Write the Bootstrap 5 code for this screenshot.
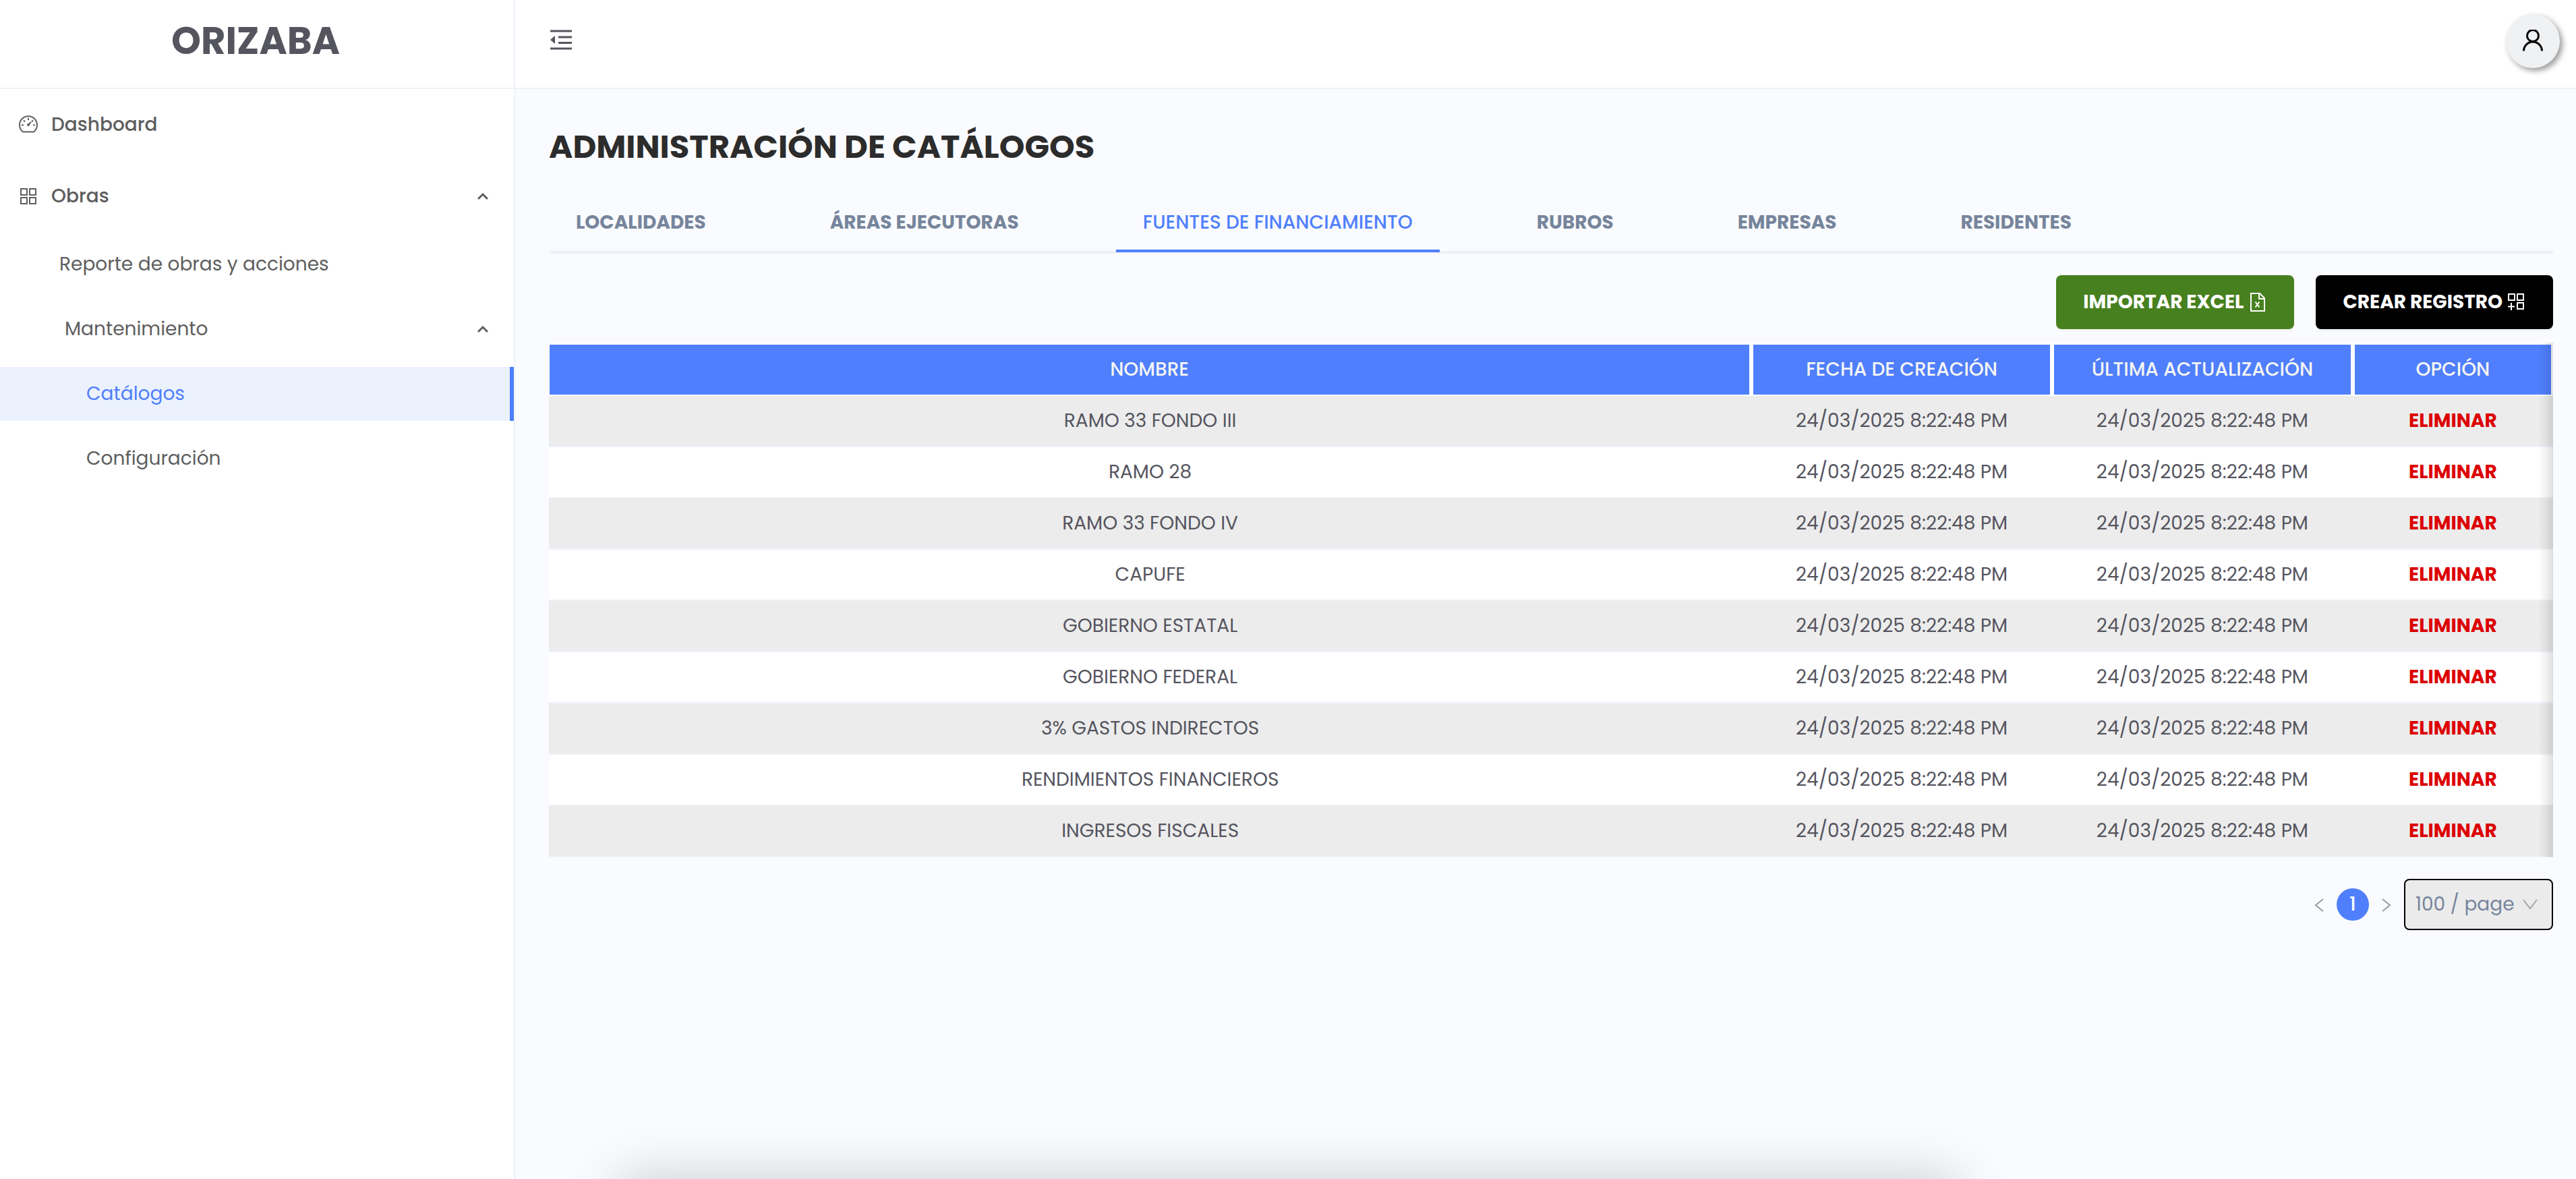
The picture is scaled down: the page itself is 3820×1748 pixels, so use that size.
<!DOCTYPE html>
<html lang="es">
<head>
<meta charset="utf-8">
<meta name="viewport" content="width=device-width, initial-scale=1">
<title>Orizaba - Administración de catálogos</title>
<link rel="stylesheet" href="https://cdn.jsdelivr.net/npm/bootstrap@5.3.0/dist/css/bootstrap.min.css">
<style>
  body { font-family: Poppins, Inter, sans-serif; font-size: 28px; line-height: 44px; color: #55555f; background: #fafbfe; }
  a { text-decoration: none; }
  .side { width: 764px; border-right: 2px solid #edf2fa; }
  .topline { height: 132px; border-bottom: 2px solid #edf2fa; }
  .brand { font-size: 56px; font-weight: 700; padding: 0 4px 8px 0; color: #55555f; }
  .menu { padding-top: 8px; gap: 16px; }
  .menu a { height: 80px; padding: 0 32px 0 128px; color: #5e5e5e; border-right: 6px solid transparent; }
  .menu a.main-item { height: 90px; padding-left: 28px; gap: 20px; font-weight: 500; }
  .menu a.sub-item { padding-left: 88px; }
  .menu a.sub-group { padding-left: 96px; }
  .menu a.active { background: #ebf2fe; color: #4f7ffc; border-right-color: #4f7ffc; }
  .iconbtn { background: none; border: 0; padding: 0; color: #55555f; }
  .bar { padding: 0 24px 8px 50px; }
  .avatar { width: 80px; height: 80px; border: 0; border-radius: 50%; background: #f0f1f3; color: #000; box-shadow: 4px 4px 8px rgba(0,0,0,.4); }
  .content { padding: 54px 34px 40px 50px; }
  .title { font-size: 48px; line-height: 64px; font-weight: 700; color: #2c2c2c; margin: 0; }
  .tabline { margin-top: 30px; height: 96px; gap: 104px; box-shadow: inset 0 -4px #edf0f6; padding-bottom: 2px; }
  .tabline a { padding: 28px 40px 0; font-weight: 700; color: #76859c; border-bottom: 4px solid transparent; white-space: nowrap; }
  .tabline a.active { color: #4f7ffc; font-weight: 500; border-bottom-color: #4f7ffc; }
  .actions { margin: 32px 0 20px; gap: 32px; }
  .actions button { height: 80px; padding: 0 40px; border: 0; border-radius: 8px; color: #fff; font-weight: 700; gap: 7px; box-shadow: 0 4px rgba(0,0,0,.02); }
  .go-import { background: #47801f; }
  .go-create { background: #000; }
  .grid-table { table-layout: fixed; width: 100%; border-collapse: separate; border-spacing: 0; background: #fff; text-align: center; }
  .grid-table th { height: 79px; padding: 0; font-weight: 500; color: #f5f5f5; background: #4f7ffc; border: 3px solid #fff; border-bottom-width: 2px; }
  .grid-table th:first-child { border-left-width: 1px; }
  .grid-table td { height: 76px; padding: 0; border-bottom: 2px solid #edf2fa; }
  .grid-table tbody tr:nth-child(odd) { background: #ececec; }
  .del { background: none; border: 0; padding: 0; font-weight: 700; color: #dc0000; }
  .edge { width: 22px; background: linear-gradient(to right, rgba(0,0,0,0), rgba(0,0,0,.05) 50%, rgba(0,0,0,.13)); }
  .pager { margin-top: 32px; }
  .pager .step { width: 32px; color: #999ba0; }
  .pager .now { width: 48px; height: 48px; border-radius: 50%; background: #4f7ffc; color: #fff; font-weight: 500; margin: 0 10px; }
  .pager .size-box { margin-left: 10px; }
  .pager select { appearance: none; width: 221px; height: 76px; padding: 0 0 0 15px; border: 2px solid #000; border-radius: 8px; background: #ebebeb; color: #76859c; }
  .pager .caret { right: 23px; top: 30px; pointer-events: none; color: #a6a6a6; }
  .dock { position: fixed; left: 24vw; width: 52vw; height: 160px; bottom: -160px; box-shadow: 0 0 80px rgba(0,0,0,.2); }
</style>
<script src="https://cdn.jsdelivr.net/npm/bootstrap@5.3.0/dist/js/bootstrap.bundle.min.js"></script>
</head>
<body>
<div class="d-flex min-vh-100">
  <aside class="side bg-white flex-shrink-0">
    <div class="topline brand d-flex align-items-center justify-content-center">ORIZABA</div>
    <nav class="menu d-flex flex-column">
      <a href="#" class="main-item d-flex align-items-center">
        <svg width="28" height="28" viewBox="0 0 28 28" fill="none" stroke="currentColor" stroke-width="2"><path stroke-linejoin="round" d="M6 24.500A13 13 0 1 1 22 24.500Z"/><path d="M14 14l4-4M14 4v3M4 14.500h3M21 14.500h3M7 7.500l2 2M21 7.500l-2 2"/><circle cx="14" cy="14" r="1"/></svg>
        Dashboard</a>
      <a href="#" class="main-item d-flex align-items-center">
        <svg width="28" height="28" viewBox="0 0 28 28" fill="none" stroke="currentColor" stroke-width="2"><path d="M3 3h9v9H3zM16 3h9v9h-9zM3 16h9v9H3zM16 16h9v9h-9z"/></svg>
        Obras
        <svg class="ms-auto" width="16" height="12" viewBox="0 0 16 12" fill="none" stroke="currentColor" stroke-width="3"><path d="M1 10l7-7 7 7"/></svg></a>
      <a href="#" class="sub-item d-flex align-items-center">Reporte de obras y acciones</a>
      <a href="#" class="sub-group d-flex align-items-center">Mantenimiento
        <svg class="ms-auto" width="16" height="12" viewBox="0 0 16 12" fill="none" stroke="currentColor" stroke-width="3"><path d="M1 10l7-7 7 7"/></svg></a>
      <a href="#" class="active d-flex align-items-center">Catálogos</a>
      <a href="#" class="d-flex align-items-center">Configuración</a>
    </nav>
  </aside>
  <div class="flex-grow-1">
    <header class="topline bar bg-white d-flex align-items-center justify-content-between">
      <button class="iconbtn" type="button" aria-label="Contraer menú"><svg class="d-block" width="36" height="34" viewBox="0 0 36 34" fill="currentColor"><path d="M2 0.500h32v3H2zM14 9.500h20v3H14zM14 18h20v3H14zM2 26.500h32v3H2zM2 15l7-6v12z"/></svg></button>
      <button class="avatar d-flex align-items-center justify-content-center" type="button" aria-label="Usuario"><svg width="32" height="34" viewBox="0 0 32 34" fill="none" stroke="currentColor" stroke-width="3"><circle cx="16" cy="9" r="8.500"/><path d="M2.500 31.500a13.500 13.500 0 0 1 27 0"/></svg></button>
    </header>
    <main class="content">
      <h1 class="title">ADMINISTRACIÓN DE CATÁLOGOS</h1>
      <nav class="tabline d-flex">
        <a href="#">LOCALIDADES</a><a href="#">ÁREAS EJECUTORAS</a><a href="#" class="active">FUENTES DE FINANCIAMIENTO</a><a href="#">RUBROS</a><a href="#">EMPRESAS</a><a href="#">RESIDENTES</a>
      </nav>
      <div class="actions d-flex justify-content-end">
        <button type="button" class="go-import d-flex align-items-center">IMPORTAR EXCEL
          <svg width="28" height="28" viewBox="0 0 28 28" fill="none" stroke="currentColor" stroke-width="2"><path d="M4 1h13l7 7v19H4zM16 1v8h8M10.500 13.500l6 8M16.500 13.500l-6 8"/></svg></button>
        <button type="button" class="go-create d-flex align-items-center">CREAR REGISTRO
          <svg width="28" height="28" viewBox="0 0 28 28" fill="none" stroke="currentColor" stroke-width="2"><path d="M2 2h9v9H2zM15 2h9v9h-9zM15 15h9v9h-9zM6 15v11M1 20.500h10"/></svg></button>
      </div>
      <div class="position-relative">
        <table class="grid-table">
          <colgroup><col style="width:60%"><col style="width:15%"><col style="width:15%"><col style="width:10%"></colgroup>
          <thead><tr><th>NOMBRE</th><th>FECHA DE CREACIÓN</th><th>ÚLTIMA ACTUALIZACIÓN</th><th>OPCIÓN</th></tr></thead>
          <tbody>
            <tr><td>RAMO 33 FONDO III</td><td>24/03/2025 8:22:48 PM</td><td>24/03/2025 8:22:48 PM</td><td><button class="del" type="button">ELIMINAR</button></td></tr>
            <tr><td>RAMO 28</td><td>24/03/2025 8:22:48 PM</td><td>24/03/2025 8:22:48 PM</td><td><button class="del" type="button">ELIMINAR</button></td></tr>
            <tr><td>RAMO 33 FONDO IV</td><td>24/03/2025 8:22:48 PM</td><td>24/03/2025 8:22:48 PM</td><td><button class="del" type="button">ELIMINAR</button></td></tr>
            <tr><td>CAPUFE</td><td>24/03/2025 8:22:48 PM</td><td>24/03/2025 8:22:48 PM</td><td><button class="del" type="button">ELIMINAR</button></td></tr>
            <tr><td>GOBIERNO ESTATAL</td><td>24/03/2025 8:22:48 PM</td><td>24/03/2025 8:22:48 PM</td><td><button class="del" type="button">ELIMINAR</button></td></tr>
            <tr><td>GOBIERNO FEDERAL</td><td>24/03/2025 8:22:48 PM</td><td>24/03/2025 8:22:48 PM</td><td><button class="del" type="button">ELIMINAR</button></td></tr>
            <tr><td>3% GASTOS INDIRECTOS</td><td>24/03/2025 8:22:48 PM</td><td>24/03/2025 8:22:48 PM</td><td><button class="del" type="button">ELIMINAR</button></td></tr>
            <tr><td>RENDIMIENTOS FINANCIEROS</td><td>24/03/2025 8:22:48 PM</td><td>24/03/2025 8:22:48 PM</td><td><button class="del" type="button">ELIMINAR</button></td></tr>
            <tr><td>INGRESOS FISCALES</td><td>24/03/2025 8:22:48 PM</td><td>24/03/2025 8:22:48 PM</td><td><button class="del" type="button">ELIMINAR</button></td></tr>
          </tbody>
        </table>
        <div class="edge position-absolute top-0 end-0 h-100"></div>
      </div>
      <div class="pager d-flex align-items-center justify-content-end">
        <button class="iconbtn step" type="button" aria-label="Anterior"><svg width="14" height="22" viewBox="0 0 14 22" fill="none" stroke="currentColor" stroke-width="2"><path d="M13 2L2 11l11 9"/></svg></button>
        <a href="#" class="now d-flex align-items-center justify-content-center">1</a>
        <button class="iconbtn step" type="button" aria-label="Siguiente"><svg width="14" height="22" viewBox="0 0 14 22" fill="none" stroke="currentColor" stroke-width="2"><path d="M1 2l11 9-11 9"/></svg></button>
        <div class="size-box position-relative">
          <select class="d-block" aria-label="Registros por página"><option>100 / page</option></select>
          <svg class="caret position-absolute" width="22" height="16" viewBox="0 0 22 16" fill="none" stroke="currentColor" stroke-width="2"><path d="M1 1l10 13L21 1"/></svg>
        </div>
      </div>
    </main>
  </div>
</div>
<div class="dock"></div>
</body>
</html>
